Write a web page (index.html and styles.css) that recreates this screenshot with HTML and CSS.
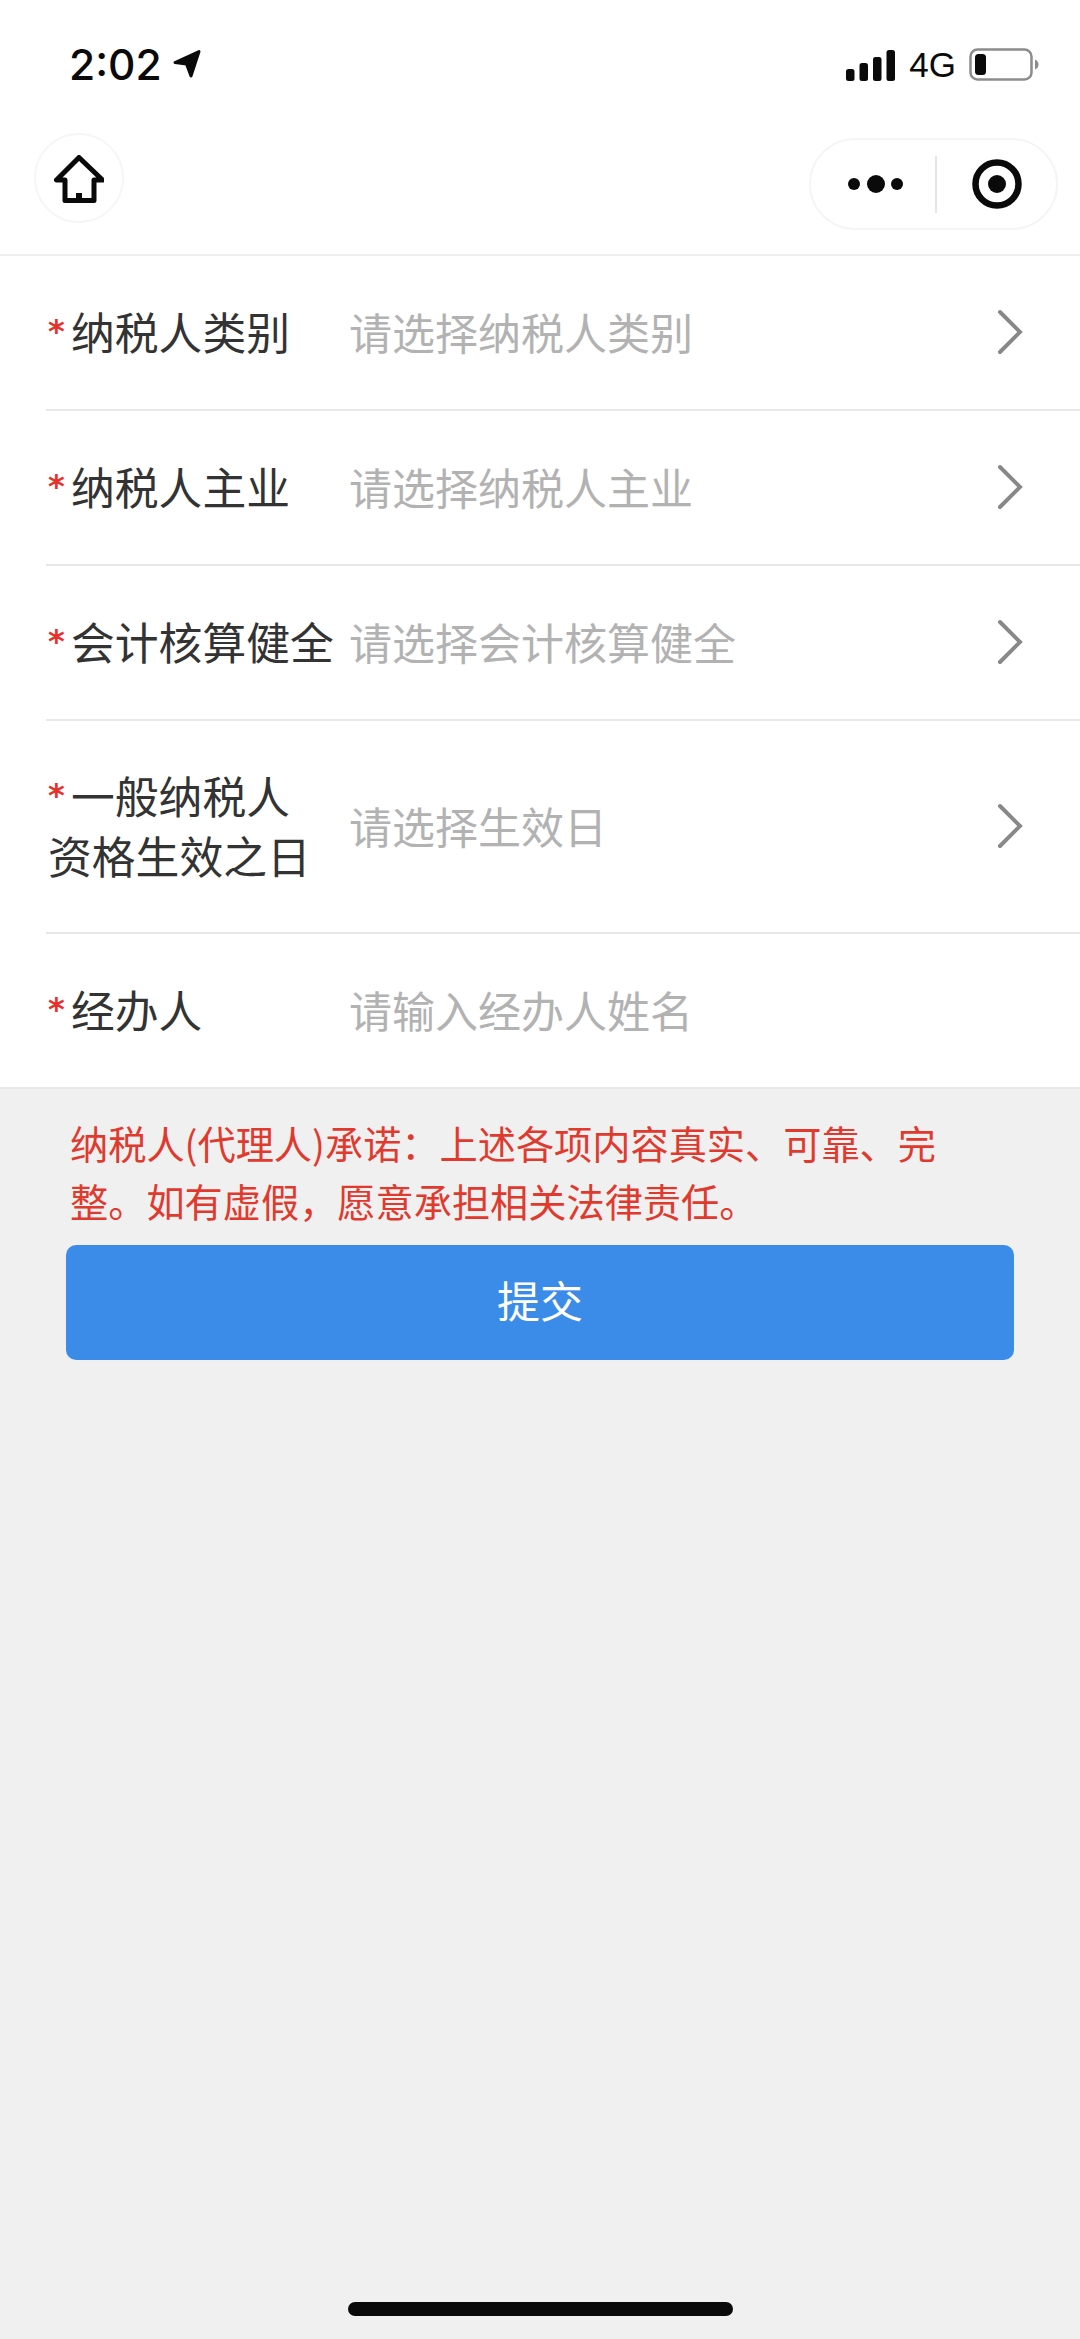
FILE: index.html
```html
<!DOCTYPE html>
<html lang="zh-CN">
<head>
<meta charset="utf-8">
<title>纳税人</title>
<link rel="stylesheet" href="styles.css">
</head>
<body>
<div class="page">
  <header class="top">
    <div class="status">
      <div class="status-left">
        <span class="time">2:02</span>
        <svg class="loc" width="28" height="30" viewBox="0 0 28 30"><path d="M2 14.500 26 3.500 18 28 13.500 16Z" fill="#0a0a0a" stroke="#0a0a0a" stroke-width="3" stroke-linejoin="round"/></svg>
      </div>
      <div class="status-right">
        <svg width="50" height="31" viewBox="0 0 50 31"><rect x="0" y="19" width="8.500" height="12" rx="2.500"/><rect x="13.500" y="13" width="8.500" height="18" rx="2.500"/><rect x="27" y="7" width="8.500" height="24" rx="2.500"/><rect x="40.500" y="0" width="8.500" height="31" rx="2.500"/></svg>
        <span class="net">4G</span>
        <svg width="70" height="34" viewBox="0 0 70 34"><rect x="1.500" y="1.500" width="61" height="30" rx="7" fill="none" stroke="#8c8c8c" stroke-width="2.500"/><rect x="6" y="6" width="11" height="21" rx="3.500" fill="#0a0a0a"/><path d="M66 11.500c2.500 1 3.500 3 3.500 5s-1 4-3.500 5z" fill="#8c8c8c"/></svg>
      </div>
    </div>
    <nav class="nav">
      <div class="home">
        <svg width="50" height="48" viewBox="0 0 50 48"><path d="M25 2.500 2.500 25h8.500v20.500h29V25h8.500Z" fill="none" stroke="#0a0a0a" stroke-width="5" stroke-linejoin="round"/><rect x="22" y="38" width="6" height="6" fill="#0a0a0a"/></svg>
      </div>
      <div class="capsule">
        <svg class="dots" width="56" height="20" viewBox="0 0 56 20"><circle cx="6" cy="10" r="6"/><circle cx="28" cy="10" r="9"/><circle cx="49" cy="10" r="6"/></svg>
        <span class="sep"></span>
        <svg class="target" width="52" height="52" viewBox="0 0 52 52"><circle cx="26" cy="26" r="21.500" fill="none" stroke="#0a0a0a" stroke-width="6.500"/><circle cx="26" cy="26" r="9"/></svg>
      </div>
    </nav>
  </header>

  <section class="form">
    <div class="row">
      <div class="label"><span class="req">*</span>纳税人类别</div>
      <div class="value">请选择纳税人类别</div>
      <svg class="chev" width="26" height="46" viewBox="0 0 26 46"><path d="M3 3 23 23 3 43" fill="none" stroke="#888" stroke-width="4" stroke-linecap="round"/></svg>
    </div>
    <div class="row">
      <div class="label"><span class="req">*</span>纳税人主业</div>
      <div class="value">请选择纳税人主业</div>
      <svg class="chev" width="26" height="46" viewBox="0 0 26 46"><path d="M3 3 23 23 3 43" fill="none" stroke="#888" stroke-width="4" stroke-linecap="round"/></svg>
    </div>
    <div class="row">
      <div class="label"><span class="req">*</span>会计核算健全</div>
      <div class="value">请选择会计核算健全</div>
      <svg class="chev" width="26" height="46" viewBox="0 0 26 46"><path d="M3 3 23 23 3 43" fill="none" stroke="#888" stroke-width="4" stroke-linecap="round"/></svg>
    </div>
    <div class="row row-tall">
      <div class="label"><span class="req">*</span>一般纳税人<br>资格生效之日</div>
      <div class="value">请选择生效日</div>
      <svg class="chev" width="26" height="46" viewBox="0 0 26 46"><path d="M3 3 23 23 3 43" fill="none" stroke="#888" stroke-width="4" stroke-linecap="round"/></svg>
    </div>
    <div class="row row-last">
      <div class="label"><span class="req">*</span>经办人</div>
      <div class="value">请输入经办人姓名</div>
    </div>
  </section>

  <section class="foot">
    <p class="promise">纳税人(代理人)承诺：上述各项内容真实、可靠、完整。如有虚假，愿意承担相关法律责任。</p>
    <button class="submit" type="button"><span class="submit-text">提交</span></button>
  </section>

  <div class="home-bar"></div>
</div>
</body>
</html>
```

FILE: styles.css
```css
* { box-sizing: border-box; }
html, body { margin: 0; padding: 0; }
body {
  width: 1080px;
  height: 2339px;
  overflow: hidden;
  background: #f0f0f0;
  font-family: "Noto Sans CJK SC", "Liberation Sans", sans-serif;
}
.page {
  position: relative;
  height: 2339px;
  display: flex;
  flex-direction: column;
}
.top {
  height: 256px;
  background: #fff;
  border-bottom: 2px solid #efefef;
  display: flex;
  flex-direction: column;
}
.status {
  height: 126px;
  padding: 45px 41px 0 69px;
  display: flex;
  justify-content: space-between;
  align-items: flex-start;
}
.status-left { display: flex; align-items: center; gap: 11px; height: 40px; }
.time {
  font-family: Inter, "Liberation Sans", sans-serif;
  font-weight: 500;
  font-size: 42.500px;
  line-height: 40px;
  color: #0a0a0a;
}
.loc { margin-top: -4px; }
.status-right { display: flex; align-items: center; gap: 13px; height: 40px; fill: #0a0a0a; }
.net {
  font-family: "Liberation Sans", sans-serif;
  font-size: 35px;
  line-height: 40px;
  color: #0a0a0a;
}
.nav {
  flex: 1;
  padding: 7px 22px 0 34px;
  display: flex;
  justify-content: space-between;
  align-items: flex-start;
}
.home {
  width: 90px;
  height: 90px;
  border-radius: 50%;
  border: 2px solid #f6f6f6;
  display: flex;
  align-items: center;
  justify-content: center;
  padding-top: 2px;
}
.capsule {
  width: 249px;
  height: 92px;
  margin-top: 5px;
  border-radius: 46px;
  border: 2px solid #f5f5f5;
  display: flex;
  align-items: center;
  fill: #0a0a0a;
  padding-left: 37px;
}
.sep { width: 2px; height: 57px; background: #e4e4e4; margin: 0 0 0 31px; }
.target { margin: 0 0 0 34px; }
.form { background: #fff; }
.row {
  height: 155px;
  margin-left: 46px;
  padding: 0 57px 0 2px;
  border-bottom: 2px solid #e8e8e8;
  display: flex;
  align-items: center;
}
.row-tall { height: 213px; }
.row-last { height: 153px; border-bottom: 0; }
.label {
  width: 301px;
  flex: none;
  font-size: 43.800px;
  line-height: 60px;
  color: #333;
  margin-top: -4px;
}
.req {
  display: inline-block;
  width: 23px;
  color: #e8302a;
  font-family: "DejaVu Sans", sans-serif;
  font-weight: 700;
  font-size: 32px;
  line-height: 32px;
  vertical-align: 8px;
}
.value {
  flex: 1;
  font-size: 43px;
  line-height: 60px;
  color: #b2b2b2;
  margin-top: -4px;
}
.chev { flex: none; margin-bottom: 2px; }
.foot {
  border-top: 2px solid #e9e9e9;
  padding: 25px 66px 0;
}
.promise {
  margin: 0 0 15px;
  padding: 0 50px 0 4px;
  font-size: 38.200px;
  line-height: 58px;
  color: #e03a2f;
}
.submit {
  display: block;
  width: 100%;
  height: 115px;
  border: 0;
  border-radius: 10px;
  background: #3b8ce8;
  color: #fff;
  font-family: inherit;
  font-size: 43px;
  padding: 0 0 8px;
}
.home-bar {
  position: absolute;
  left: 348px;
  top: 2302px;
  width: 385px;
  height: 14px;
  border-radius: 7px;
  background: #0a0a0a;
}
```
